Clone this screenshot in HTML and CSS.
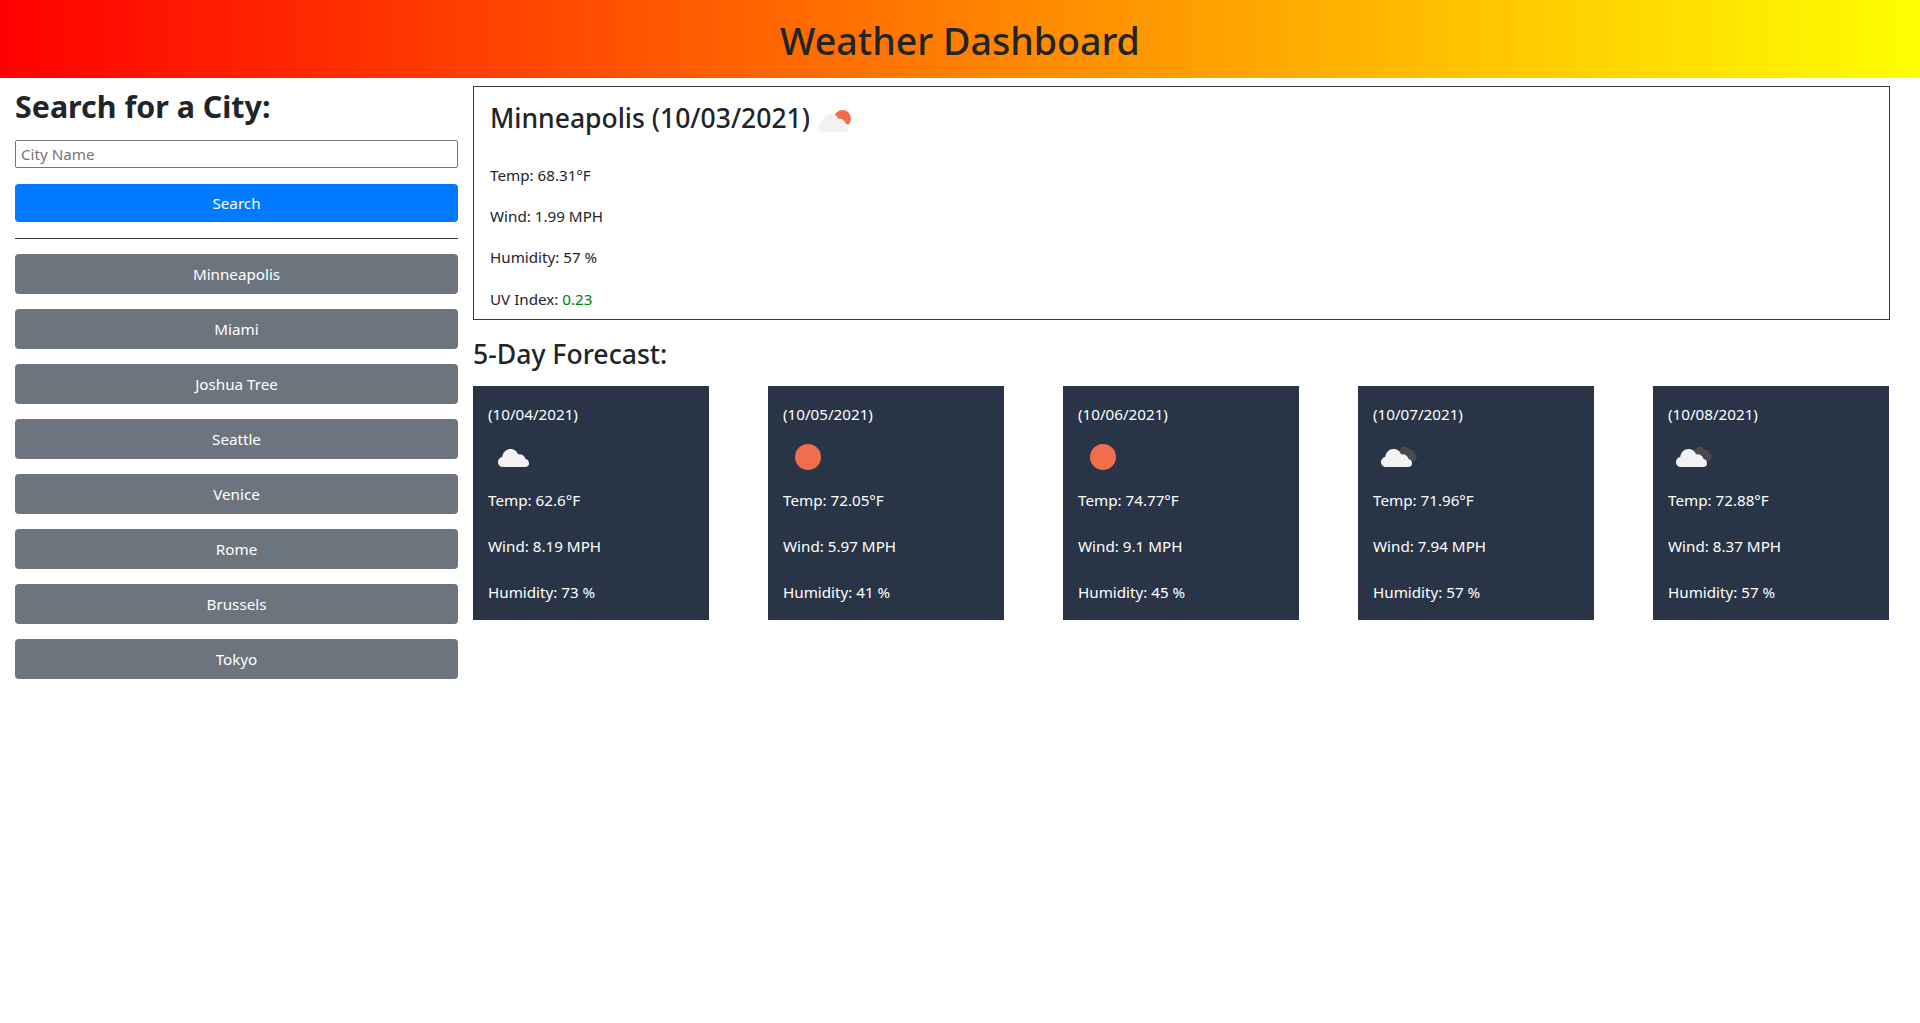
FILE: index.html
```html
<!DOCTYPE html>
<html lang="en">
<head>
<meta charset="utf-8">
<title>Weather Dashboard</title>
<link rel="stylesheet" href="styles.css">
</head>
<body>
<svg class="defs" aria-hidden="true">
  <defs>
    <path id="cloud" d="M14 35c-3 0-5-2.300-5-5 0-2.600 1.700-4.700 4.200-5 .6-4.600 4-8 8.300-8 3.600 0 6.500 2.200 7.600 5.300 3.700-.5 6.600 1.400 7.400 4.800 2.400.4 3.500 2.300 3.500 4.300 0 2-1.500 3.600-3.700 3.600z"/>
    <path id="sun-disc" d="M12 25a13 13 0 1 0 26 0a13 13 0 1 0-26 0z"/>
    <path id="back-cloud" d="M26 22c-.3-4 2.500-7.500 5.500-7.500 2.300 0 4 1.300 5 3.300 2.700-.4 4.800 1.300 5.200 4 1.600.8 2.300 2.300 2 4-.3 1.800-1.800 3.200-3.700 3.200H30z"/>
  </defs>
</svg>

<header class="banner"><h1 class="banner-title">Weather Dashboard</h1></header>

<main class="layout">
  <aside class="sidebar">
    <h2 class="search-title">Search for a City:</h2>
    <input class="city-input" type="text" placeholder="City Name">
    <button class="btn btn-primary" type="button">Search</button>
    <hr class="divider">
    <ul class="history">
      <li><button class="btn btn-city" type="button">Minneapolis</button></li>
      <li><button class="btn btn-city" type="button">Miami</button></li>
      <li><button class="btn btn-city" type="button">Joshua Tree</button></li>
      <li><button class="btn btn-city" type="button">Seattle</button></li>
      <li><button class="btn btn-city" type="button">Venice</button></li>
      <li><button class="btn btn-city" type="button">Rome</button></li>
      <li><button class="btn btn-city" type="button">Brussels</button></li>
      <li><button class="btn btn-city" type="button">Tokyo</button></li>
    </ul>
  </aside>

  <section class="content">
    <article class="current">
      <div class="current-head">
        <h2 class="current-title">Minneapolis (10/03/2021)</h2>
        <svg class="icon current-icon" viewBox="0 0 50 50">
          <circle class="sun" cx="33.500" cy="21.500" r="8.500"/>
          <use href="#cloud" class="cloud-light halo"/>
        </svg>
      </div>
      <p class="line">Temp: 68.31°F</p>
      <p class="line">Wind: 1.99 MPH</p>
      <p class="line">Humidity: 57 %</p>
      <p class="line">UV Index: <span class="uv">0.23</span></p>
    </article>

    <h3 class="forecast-title">5-Day Forecast:</h3>
    <div class="forecast">
      <article class="card">
        <p class="date">(10/04/2021)</p>
        <svg class="icon" viewBox="0 0 50 50"><use href="#cloud" class="cloud-light" transform="translate(1 0)"/></svg>
        <p class="stat">Temp: 62.6°F</p>
        <p class="stat">Wind: 8.19 MPH</p>
        <p class="stat">Humidity: 73 %</p>
      </article>
      <article class="card">
        <p class="date">(10/05/2021)</p>
        <svg class="icon" viewBox="0 0 50 50"><use href="#sun-disc" class="sun"/></svg>
        <p class="stat">Temp: 72.05°F</p>
        <p class="stat">Wind: 5.97 MPH</p>
        <p class="stat">Humidity: 41 %</p>
      </article>
      <article class="card">
        <p class="date">(10/06/2021)</p>
        <svg class="icon" viewBox="0 0 50 50"><use href="#sun-disc" class="sun"/></svg>
        <p class="stat">Temp: 74.77°F</p>
        <p class="stat">Wind: 9.1 MPH</p>
        <p class="stat">Humidity: 45 %</p>
      </article>
      <article class="card">
        <p class="date">(10/07/2021)</p>
        <svg class="icon" viewBox="0 0 50 50"><use href="#back-cloud" class="cloud-dark"/><use href="#cloud" class="cloud-light" transform="translate(-1 0)"/></svg>
        <p class="stat">Temp: 71.96°F</p>
        <p class="stat">Wind: 7.94 MPH</p>
        <p class="stat">Humidity: 57 %</p>
      </article>
      <article class="card">
        <p class="date">(10/08/2021)</p>
        <svg class="icon" viewBox="0 0 50 50"><use href="#back-cloud" class="cloud-dark"/><use href="#cloud" class="cloud-light" transform="translate(-1 0)"/></svg>
        <p class="stat">Temp: 72.88°F</p>
        <p class="stat">Wind: 8.37 MPH</p>
        <p class="stat">Humidity: 57 %</p>
      </article>
    </div>
  </section>
</main>
</body>
</html>
```
FILE: styles.css
```css
* { box-sizing: border-box; }
html, body { margin: 0; padding: 0; }
body {
  background: #fff;
  color: #212529;
  font-family: "Noto Sans", "Open Sans", sans-serif;
  font-size: 15.2px;
  line-height: 24px;
}
.defs { display: none; }
h1, h2, h3, p, ul { margin: 0; padding: 0; }
ul { list-style: none; }

.banner {
  height: 78px;
  display: flex;
  align-items: center;
  justify-content: center;
  background: linear-gradient(to right, #f00, #ff0);
}
.banner-title { font-size: 37.6px; line-height: 46px; font-weight: 500; margin-top: 4px; }

.layout { display: flex; }
.sidebar { flex: 0 0 473px; padding: 10px 15px 0; }
.search-title { font-size: 30.4px; line-height: 38px; font-weight: 700; margin-bottom: 14px; }
.city-input {
  display: block;
  width: 100%;
  height: 28px;
  border: 1px solid #767676;
  border-radius: 2px;
  padding: 0 5px;
  font: inherit;
  color: #212529;
  margin-bottom: 16px;
}
.city-input::placeholder { color: #757575; opacity: 1; }
.btn {
  display: block;
  width: 100%;
  border: 0;
  border-radius: 4px;
  color: #fff;
  font: inherit;
  text-align: center;
  padding: 0;
}
.btn-primary { height: 38px; background: #007bff; }
.btn-city { height: 40px; background: #6c757d; }
.divider { border: 0; border-top: 1px solid #343a40; margin: 16px 0 15px; }
.history { display: flex; flex-direction: column; gap: 15px; }

.content { flex: 0 0 1417px; padding-top: 8px; }
.current {
  height: 234px;
  border: 1px solid #343a40;
  padding: 14px 16px 8px;
}
.current-head { display: flex; align-items: center; height: 34px; margin-bottom: 28px; }
.current-title { font-size: 26.5px; line-height: 34px; font-weight: 500; }
.icon { display: block; width: 50px; height: 50px; flex: none; }
.current-icon { margin: 8px 0 0 -1px; }
.line { margin-bottom: 17.2px; }
.uv { color: #008000; }

.forecast-title { font-size: 26.6px; line-height: 34px; font-weight: 500; margin: 17px 0 15px; }
.forecast { display: flex; gap: 59px; }
.card {
  flex: 0 0 236px;
  height: 234px;
  padding: 16px 15px;
  background: #293546;
  color: #fff;
}
.card .icon { margin: 6px 0; }
.stat { margin-bottom: 22px; }
.stat:last-child { margin-bottom: 0; }

.sun { fill: #ee6e4d; }
.cloud-light { fill: #f2f2f2; }
.cloud-dark { fill: #4a4a4a; }
.halo { stroke: #fff; stroke-width: 1; paint-order: stroke; }
```
